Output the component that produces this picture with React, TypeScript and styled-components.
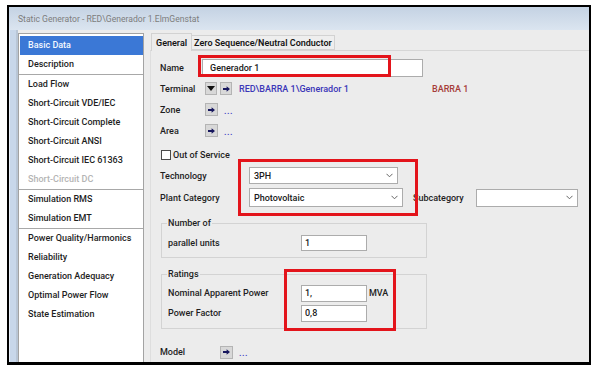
import React from 'react';
import styled, { createGlobalStyle } from 'styled-components';

const FONT = `Roboto, "Liberation Sans", Arial, sans-serif`;

const GlobalStyle = createGlobalStyle`
  html, body { margin: 0; padding: 0; background: #ffffff; }
  * { box-sizing: border-box; }
`;

const Page = styled.div`
  position: relative;
  width: 598px;
  height: 372px;
  padding: 5px 0 0 7px;
  overflow: hidden;
  background: #ffffff;
  font-family: ${FONT};
  font-size: 9px;
  font-weight: 500;
  color: #1e1e1e;
`;

const Window = styled.div`
  width: 584px;
  height: 360px;
  border: 2px solid #000;
  border-bottom-width: 3px;
  display: flex;
  flex-direction: column;
  overflow: hidden;
`;

const TitleBar = styled.div`
  flex: none;
  height: 23px;
  padding-left: 9px;
  display: flex;
  align-items: center;
  background: linear-gradient(#c4d2e3, #dbe5f0);
  color: #7d7d7d;
  font-size: 8.6px;
  font-weight: 400;
`;

const Body = styled.div`
  flex: 1;
  display: flex;
  min-height: 0;
`;

const FrameEdge = styled.div`
  flex: none;
  width: 9px;
  background: linear-gradient(to right, #e8eff8 0, #e8eff8 1px, #c8d7ea 1px, #c8d7ea 7px, #b9c6d6 7px);
`;

const Client = styled.div`
  flex: 1;
  display: flex;
  padding-top: 3px;
  background: #ececec;
  min-width: 0;
`;

const Sidebar = styled.ul`
  flex: none;
  width: 126px;
  margin: 0;
  padding: 2px 0 0 1px;
  list-style: none;
  background: #ffffff;
  border: 1px solid #a3a3a3;
  border-bottom: none;
`;

const NavItem = styled.li<{ $active?: boolean; $disabled?: boolean; $sep?: boolean }>`
  height: ${p => (p.$sep ? 20 : 19)}px;
  line-height: 19px;
  white-space: nowrap;
  background: ${p => (p.$active ? '#3b78d6' : 'transparent')};
  color: ${p => (p.$active ? '#f4f8ff' : p.$disabled ? '#b4b4b4' : '#1e1e1e')};
  border-bottom: ${p => (p.$sep ? '1px solid #a8a8a8' : 'none')};
  margin-left: ${p => (p.$sep ? -1 : 0)}px;
  padding-left: ${p => (p.$sep ? 9 : 8)}px;
`;

const TabArea = styled.div`
  flex: 1;
  margin-left: 6px;
  display: flex;
  flex-direction: column;
  min-width: 0;
`;

const TabStrip = styled.div`
  flex: none;
  height: 17px;
  display: flex;
  align-items: flex-end;
  padding-left: 1px;
  position: relative;
  z-index: 1;
`;

const Tab = styled.div<{ $active?: boolean }>`
  height: ${p => (p.$active ? 18 : 15)}px;
  margin-bottom: ${p => (p.$active ? -1 : 0)}px;
  padding: 0 ${p => (p.$active ? 4 : 2)}px;
  display: flex;
  align-items: center;
  white-space: nowrap;
  background: ${p => (p.$active ? '#ececec' : '#eeeeee')};
  border: 1px solid #d2d2d2;
  border-bottom: ${p => (p.$active ? 'none' : '1px solid #d2d2d2')};
  border-left-width: ${p => (p.$active ? 1 : 0)}px;
  color: #161616;
  font-weight: 600;
`;

const Panel = styled.div`
  flex: 1;
  border-top: 1px solid #d6d6d6;
  border-left: 1px solid #dedede;
  background: #ececec;
  padding: 6px 0 0 9px;
  display: flex;
  flex-direction: column;
`;

const Row = styled.div<{ $h?: number; $mt?: number }>`
  flex: none;
  display: flex;
  align-items: center;
  height: ${p => p.$h ?? 21}px;
  margin-top: ${p => p.$mt ?? 0}px;
  white-space: nowrap;
`;

const Label = styled.span<{ $w?: number }>`
  flex: none;
  width: ${p => (p.$w ? `${p.$w}px` : 'auto')};
`;

const Field = styled.input<{ $w: number; $h: number; $pl?: number }>`
  flex: none;
  width: ${p => p.$w}px;
  height: ${p => p.$h}px;
  margin: 0;
  padding: 0 0 0 ${p => p.$pl ?? 3}px;
  border: 1px solid #acacac;
  background: #ffffff;
  font: inherit;
  color: #1a1a1a;
  outline: none;
`;

const SelectBox = styled.div<{ $w: number; $h: number }>`
  flex: none;
  width: ${p => p.$w}px;
  height: ${p => p.$h}px;
  display: flex;
  align-items: center;
  justify-content: space-between;
  padding: 0 4px 0 4px;
  border: 1px solid #acacac;
  background: #ffffff;
  color: #1a1a1a;
`;

const IconButton = styled.span<{ $w?: number; $ml?: number }>`
  flex: none;
  width: ${p => p.$w ?? 12}px;
  height: 13px;
  margin-left: ${p => p.$ml ?? 0}px;
  display: inline-flex;
  align-items: center;
  justify-content: center;
  background: #d8d8d8;
  border: 1px solid #b4b4b4;
`;

const Dots = styled.span<{ $ml: number }>`
  margin-left: ${p => p.$ml}px;
  color: #3a3ac4;
  font-size: 9px;
  letter-spacing: 0.5px;
  position: relative;
  top: 1px;
`;

const Link = styled.span<{ $w: number; $ml: number }>`
  flex: none;
  width: ${p => p.$w}px;
  margin-left: ${p => p.$ml}px;
  color: #3b36b8;
`;

const RefText = styled.span`
  color: #a63c38;
`;

const Check = styled.span`
  flex: none;
  width: 10px;
  height: 10px;
  margin: 0 2px 0 1px;
  border: 1px solid #4a4a4a;
  background: #ffffff;
`;

const Group = styled.fieldset<{ $mt: number }>`
  flex: none;
  width: 266px;
  margin: ${p => p.$mt}px 0 0 1px;
  padding: 0 0 5px 6px;
  border: 1px solid #d3d3d3;
  min-width: 0;
`;

const Legend = styled.legend`
  padding: 0 1px;
  margin-left: -1px;
  line-height: 12px;
  height: 12px;
`;

const Unit = styled.span`
  margin-left: 2px;
`;

const Highlight = styled.div<{ $x: number; $y: number; $w: number; $h: number }>`
  position: absolute;
  left: ${p => p.$x}px;
  top: ${p => p.$y}px;
  width: ${p => p.$w}px;
  height: ${p => p.$h}px;
  border: 3px solid #e3141b;
  pointer-events: none;
`;

const Arrow = () => (
  <svg width="7" height="6" viewBox="0 0 7 6">
    <path d="M0 2.1h3.6V0.3L7 3 3.6 5.7V3.9H0z" fill="#17175e" />
  </svg>
);

const DownTri = () => (
  <svg width="8" height="5" viewBox="0 0 8 5">
    <path d="M0 0h8L4 5z" fill="#111" />
  </svg>
);

const Chevron = () => (
  <svg width="7" height="5" viewBox="0 0 7 5">
    <polyline points="0.5,0.8 3.5,3.8 6.5,0.8" fill="none" stroke="#666" strokeWidth="1" />
  </svg>
);

const navItems: { label: string; active?: boolean; disabled?: boolean; sep?: boolean }[] = [
  { label: 'Basic Data', active: true },
  { label: 'Description', sep: true },
  { label: 'Load Flow' },
  { label: 'Short-Circuit VDE/IEC' },
  { label: 'Short-Circuit Complete' },
  { label: 'Short-Circuit ANSI' },
  { label: 'Short-Circuit IEC 61363' },
  { label: 'Short-Circuit DC', disabled: true, sep: true },
  { label: 'Simulation RMS' },
  { label: 'Simulation EMT', sep: true },
  { label: 'Power Quality/Harmonics' },
  { label: 'Reliability' },
  { label: 'Generation Adequacy' },
  { label: 'Optimal Power Flow' },
  { label: 'State Estimation' },
];

export default function App() {
  return (
    <Page>
      <GlobalStyle />
      <Window>
        <TitleBar>Static Generator - RED\Generador 1.ElmGenstat</TitleBar>
        <Body>
          <FrameEdge />
          <Client>
            <Sidebar>
              {navItems.map(item => (
                <NavItem key={item.label} $active={item.active} $disabled={item.disabled} $sep={item.sep}>
                  {item.label}
                </NavItem>
              ))}
            </Sidebar>
            <TabArea>
              <TabStrip>
                <Tab $active>General</Tab>
                <Tab>Zero Sequence/Neutral Conductor</Tab>
              </TabStrip>
              <Panel>
                <Row>
                  <Label $w={42}>Name</Label>
                  <Field $w={221} $h={18} $pl={7} readOnly value="Generador 1" />
                </Row>
                <Row>
                  <Label $w={45}>Terminal</Label>
                  <IconButton><DownTri /></IconButton>
                  <IconButton $ml={3}><Arrow /></IconButton>
                  <Link $w={193} $ml={7}>RED\BARRA 1\Generador 1</Link>
                  <RefText>BARRA 1</RefText>
                </Row>
                <Row>
                  <Label $w={45}>Zone</Label>
                  <IconButton $w={13}><Arrow /></IconButton>
                  <Dots $ml={6}>...</Dots>
                </Row>
                <Row>
                  <Label $w={45}>Area</Label>
                  <IconButton $w={13}><Arrow /></IconButton>
                  <Dots $ml={6}>...</Dots>
                </Row>
                <Row $h={20} $mt={4}>
                  <Check />
                  <span>Out of Service</span>
                </Row>
                <Row>
                  <Label $w={89}>Technology</Label>
                  <SelectBox $w={149} $h={17}>
                    <span>3PH</span>
                    <Chevron />
                  </SelectBox>
                </Row>
                <Row $mt={1}>
                  <Label $w={89}>Plant Category</Label>
                  <SelectBox $w={154} $h={19}>
                    <span>Photovoltaic</span>
                    <Chevron />
                  </SelectBox>
                  <Label $w={63} style={{ marginLeft: 10 }}>Subcategory</Label>
                  <SelectBox $w={102} $h={18}>
                    <span />
                    <Chevron />
                  </SelectBox>
                </Row>
                <Group $mt={9}>
                  <Legend>Number of</Legend>
                  <Row $h={18} $mt={5}>
                    <Label $w={133}>parallel units</Label>
                    <Field $w={66} $h={16} readOnly value="1" />
                  </Row>
                </Group>
                <Group $mt={10}>
                  <Legend>Ratings</Legend>
                  <Row $h={20} $mt={3}>
                    <Label $w={133}>Nominal Apparent Power</Label>
                    <Field $w={66} $h={17} readOnly value="1," />
                    <Unit>MVA</Unit>
                  </Row>
                  <Row $h={20}>
                    <Label $w={133}>Power Factor</Label>
                    <Field $w={66} $h={17} readOnly value="0,8" />
                  </Row>
                </Group>
                <Row $h={20} $mt={13}>
                  <Label $w={60}>Model</Label>
                  <IconButton $w={13}><Arrow /></IconButton>
                  <Dots $ml={6}>...</Dots>
                </Row>
              </Panel>
            </TabArea>
          </Client>
        </Body>
      </Window>
      <Highlight $x={198} $y={55} $w={193} $h={22} />
      <Highlight $x={238} $y={159} $w={180} $h={57} />
      <Highlight $x={284} $y={269} $w={112} $h={62} />
    </Page>
  );
}
